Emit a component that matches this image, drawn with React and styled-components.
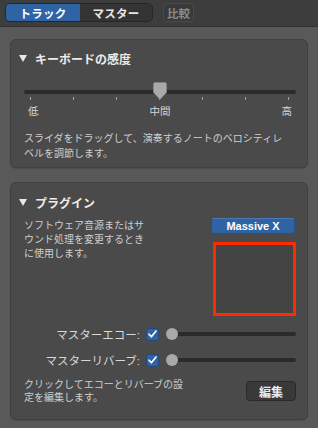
import React from 'react';
import styled, {createGlobalStyle} from 'styled-components';

const GlobalStyle = createGlobalStyle`
  html, body {
    margin: 0;
    padding: 0;
    background: #595959;
  }
  body {
    font-family: "Liberation Sans", "Noto Sans CJK JP", sans-serif;
    -webkit-font-smoothing: antialiased;
  }
`;

const TICKS = [0, 1, 2, 3, 4, 5, 6];

const Thumb = () => (
  <ThumbSvg width="14" height="18" viewBox="0 0 14 18">
    <path d="M2 0.5 H12 Q13.5 0.5 13.5 2 V10.5 L7 17.5 L0.5 10.5 V2 Q0.5 0.5 2 0.5 Z" fill="#a9a9a9" stroke="#8a8a8a" strokeWidth="0.6"/>
  </ThumbSvg>
);

const Check = () => (
  <svg width="9" height="8" viewBox="0 0 9 8">
    <path d="M1 4.2 L3.4 6.8 L8 1" fill="none" stroke="#ffffff" strokeWidth="1.6" strokeLinecap="round" strokeLinejoin="round"/>
  </svg>
);

const ToggleRow = ({label, value}) => (
  <Row>
    <RowLabel>{label}</RowLabel>
    <CheckBox><Check/></CheckBox>
    <MiniSlider>
      <MiniTrack/>
      <Knob style={{left: `${value}%`}}/>
    </MiniSlider>
  </Row>
);

const App = () => {
  return (
    <Page>
      <GlobalStyle/>
      <TopBar>
        <Segmented>
          <Segment active>トラック</Segment>
          <Segment>マスター</Segment>
        </Segmented>
        <CompareButton>比較</CompareButton>
      </TopBar>

      <Content>
        <Panel $top={10}>
          <PanelTitle><Disclosure/>キーボードの感度</PanelTitle>
          <Slider>
            <Track/>
            {TICKS.map(i => (
              <Tick key={i} style={{left: `${6 + i * 43}px`}}/>
            ))}
            <ThumbHolder style={{left: '50%'}}><Thumb/></ThumbHolder>
          </Slider>
          <RangeLabels>
            <span>低</span>
            <span>中間</span>
            <span>高</span>
          </RangeLabels>
          <Desc $lh={15} $mt={13}>
            スライダをドラッグして、演奏するノートのベロシティレ<br/>
            ベルを調節します。
          </Desc>
        </Panel>

        <Panel $top={11} $bottom={15}>
          <PanelTitle><Disclosure/>プラグイン</PanelTitle>
          <PluginRow>
            <Desc $lh={14} $mt={3}>
              ソフトウェア音源またはサ<br/>
              ウンド処理を変更するとき<br/>
              に使用します。
            </Desc>
            <PluginColumn>
              <PluginButton>Massive X</PluginButton>
              <PluginSlot/>
            </PluginColumn>
          </PluginRow>
          <Rows>
            <ToggleRow label="マスターエコー:" value={0}/>
            <ToggleRow label="マスターリバーブ:" value={0}/>
          </Rows>
          <Footer>
            <Desc $lh={13}>
              クリックしてエコーとリバーブの設<br/>
              定を編集します。
            </Desc>
            <EditButton>編集</EditButton>
          </Footer>
        </Panel>
      </Content>
    </Page>
  );
};

const Page = styled.div`
  width: 318px;
  height: 428px;
  background: #595959;
  overflow: hidden;
`;

const TopBar = styled.div`
  height: 27px;
  box-sizing: border-box;
  padding: 3px 5px 0;
  background: #3d3d3d;
  border-bottom: 1px solid #333333;
  display: flex;
  align-items: flex-start;
`;

const Segmented = styled.div`
  width: 148px;
  height: 19px;
  box-sizing: border-box;
  border: 1px solid #262626;
  border-radius: 5px;
  overflow: hidden;
  display: flex;
  background: #333333;
`;

const Segment = styled.div`
  width: ${p => (p.active ? '74px' : 'auto')};
  flex: ${p => (p.active ? 'none' : '1')};
  display: flex;
  align-items: center;
  justify-content: center;
  font-size: 11.5px;
  font-weight: 700;
  color: ${p => (p.active ? '#ffffff' : '#e6e6e6')};
  background: ${p => (p.active ? '#2e63a4' : '#343434')};
  letter-spacing: 0.2px;
`;

const CompareButton = styled.div`
  margin-left: 10px;
  width: 31px;
  height: 19px;
  box-sizing: border-box;
  border: 1px solid #4a4a4a;
  border-radius: 4px;
  background: #3a3a3a;
  color: #8a8a8a;
  font-size: 11.5px;
  font-weight: 700;
  display: flex;
  align-items: center;
  justify-content: center;
`;

const Content = styled.div`
  padding: 12px 10px 0;
  display: flex;
  flex-direction: column;
  gap: 14px;
`;

const Panel = styled.div`
  background: #4a4a4a;
  border: 1px solid #404040;
  border-radius: 6px;
  padding: ${p => p.$top}px 11px ${p => p.$bottom ?? 6}px 13px;
  box-shadow: 0 1px 1px rgba(0, 0, 0, 0.15);
`;

const PanelTitle = styled.div`
  display: flex;
  align-items: center;
  height: 16px;
  font-size: 12px;
  font-weight: 700;
  color: #ececec;
  margin-left: -5px;
`;

const Disclosure = styled.span`
  width: 0;
  height: 0;
  border-left: 4px solid transparent;
  border-right: 4px solid transparent;
  border-top: 7px solid #e8e8e8;
  margin-right: 8px;
`;

const Slider = styled.div`
  position: relative;
  height: 20px;
  margin-top: 16px;
`;

const Track = styled.div`
  position: absolute;
  left: 0;
  right: 0;
  top: 8px;
  height: 4px;
  border-radius: 2px;
  background: #2b2b2b;
`;

const Tick = styled.div`
  position: absolute;
  top: 15px;
  width: 1px;
  height: 3px;
  background: #a0a0a0;
`;

const ThumbHolder = styled.div`
  position: absolute;
  top: 0;
  transform: translateX(-7px);
  line-height: 0;
`;

const ThumbSvg = styled.svg`
  display: block;
`;

const RangeLabels = styled.div`
  display: flex;
  justify-content: space-between;
  padding: 0 4px;
  margin-top: 2px;
  font-size: 10.5px;
  line-height: 14px;
  color: #d6d6d6;
`;

const Desc = styled.div`
  font-size: 10px;
  line-height: ${p => p.$lh}px;
  color: #cfcfcf;
  margin-top: ${p => p.$mt ?? 0}px;
  white-space: nowrap;
`;

const PluginRow = styled.div`
  display: flex;
  justify-content: space-between;
  align-items: flex-start;
  margin-top: 6px;
`;

const PluginColumn = styled.div`
  display: flex;
  flex-direction: column;
  padding-top: 2px;
  gap: 8px;
  width: 85px;
`;

const PluginButton = styled.div`
  width: 84px;
  height: 16px;
  box-sizing: border-box;
  background: #2f63a3;
  border: 1px solid #27508a;
  border-top-color: #4c78b3;
  border-radius: 3px;
  color: #ffffff;
  font-size: 11px;
  font-weight: 700;
  display: flex;
  align-items: center;
  justify-content: center;
`;

const PluginSlot = styled.div`
  margin-left: 2px;
  width: 83px;
  height: 74px;
  box-sizing: border-box;
  border: 3px solid #ff2a00;
  background: #444444;
`;

const Rows = styled.div`
  display: flex;
  flex-direction: column;
  gap: 8px;
  margin-top: 9px;
`;

const Row = styled.div`
  display: flex;
  align-items: center;
  height: 18px;
`;

const RowLabel = styled.div`
  width: 116px;
  text-align: right;
  font-size: 11.5px;
  color: #d9d9d9;
  white-space: nowrap;
`;

const CheckBox = styled.div`
  margin-left: 6px;
  width: 13px;
  height: 13px;
  box-sizing: border-box;
  border-radius: 3px;
  background: #2f63a3;
  border: 1px solid #23487a;
  display: flex;
  align-items: center;
  justify-content: center;
`;

const MiniSlider = styled.div`
  position: relative;
  flex: 1;
  height: 12px;
  margin-left: 7px;
`;

const MiniTrack = styled.div`
  position: absolute;
  left: 0;
  right: 0;
  top: 4px;
  height: 4px;
  border-radius: 2px;
  background: #2b2b2b;
`;

const Knob = styled.div`
  position: absolute;
  top: 0;
  width: 12px;
  height: 12px;
  border-radius: 50%;
  background: #a9a9a9;
`;

const Footer = styled.div`
  display: flex;
  justify-content: space-between;
  align-items: flex-start;
  margin-top: 9px;
`;

const EditButton = styled.div`
  margin-top: 3px;
  width: 50px;
  height: 20px;
  box-sizing: border-box;
  border-radius: 4px;
  background: #393939;
  border: 1px solid #2a2a2a;
  color: #ececec;
  font-size: 12px;
  font-weight: 700;
  display: flex;
  align-items: center;
  justify-content: center;
`;

export default App;
